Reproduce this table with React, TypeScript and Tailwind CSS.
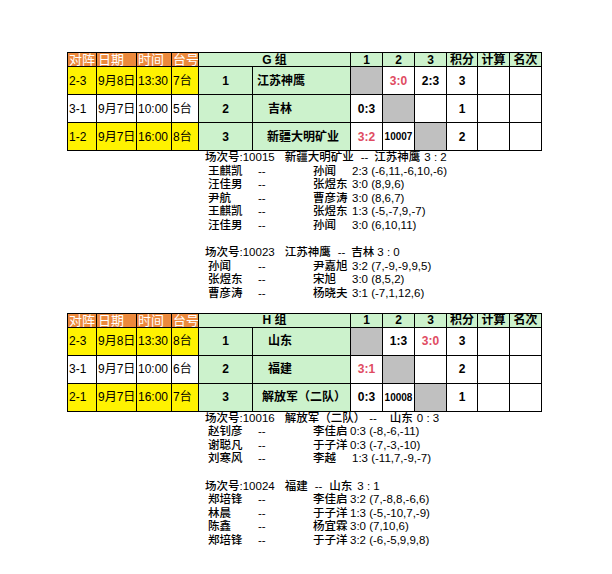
import React from "react";

type Cell = { t?: string; red?: boolean; gray?: boolean; small?: boolean };
type Row = {
  vs: string;
  date: string;
  time: string;
  table: string;
  yellow: boolean;
  num: string;
  team: string;
  pl: number;
  cells: Cell[];
  pts: string;
};

const FONT = "font-['Liberation_Sans','Noto_Sans_CJK_SC',sans-serif]";

function GroupTable({ title, rows }: { title: string; rows: Row[] }) {
  const hdrO = "bg-[#ec893c] text-white text-[13px] leading-[13px] pl-px flex items-center overflow-hidden whitespace-nowrap";
  const hdrG = "bg-[#ccf2cc] text-black text-[12px] font-bold flex items-center justify-center overflow-hidden whitespace-nowrap";
  return (
    <div className="grid w-fit bg-black gap-px p-px grid-cols-[28px_39px_34px_26px_53px_97px_31px_31px_31px_30px_31px_31px] grid-rows-[13px_27px_27px_27px]">
      <div className={hdrO}>对阵</div>
      <div className={hdrO}>日期</div>
      <div className={hdrO}>时间</div>
      <div className={hdrO}>台号</div>
      <div className={`${hdrG} col-span-2`}>{title}</div>
      <div className={hdrG}>1</div>
      <div className={hdrG}>2</div>
      <div className={hdrG}>3</div>
      <div className={hdrG}>积分</div>
      <div className={hdrG}>计算</div>
      <div className={hdrG}>名次</div>
      {rows.map((r, i) => {
        const left = `${r.yellow ? "bg-[#fff200]" : "bg-white"} text-[12px] text-black pl-px flex items-center whitespace-nowrap overflow-hidden`;
        return (
          <React.Fragment key={i}>
            <div className={left}>{r.vs}</div>
            <div className={left}>{r.date}</div>
            <div className={left}>{r.time}</div>
            <div className={left}>{r.table}</div>
            <div className="bg-[#ccf2cc] text-[12px] font-bold flex items-center justify-center">{r.num}</div>
            <div className="bg-[#ccf2cc] text-[12px] font-bold flex items-center whitespace-nowrap overflow-hidden" style={{ paddingLeft: r.pl }}>
              {r.team}
            </div>
            {r.cells.map((c, j) => (
              <div
                key={j}
                className={`${c.gray ? "bg-[#c0c0c0]" : "bg-white"} ${c.red ? "text-[#e04b62]" : "text-black"} ${c.small ? "text-[10px]" : "text-[12px]"} font-bold flex items-center justify-center whitespace-nowrap overflow-hidden`}
              >
                {c.t}
              </div>
            ))}
            <div className="bg-white text-[12px] font-bold flex items-center justify-center">{r.pts}</div>
            <div className="bg-white" />
            <div className="bg-white" />
          </React.Fragment>
        );
      })}
    </div>
  );
}

type Match = {
  no: string;
  a: string;
  b: string;
  score: string;
  m: [number, number, number, number];
  games: { p: string; o: string; s: string; ow: number }[];
};

function MatchBlock({ m }: { m: Match }) {
  return (
    <div>
      <div className="flex whitespace-nowrap h-[13.6px]">
        <span>场次号:{m.no}</span>
        <span style={{ marginLeft: m.m[0] }}>{m.a}</span>
        <span style={{ marginLeft: m.m[1] }}>--</span>
        <span style={{ marginLeft: m.m[2] }}>{m.b}</span>
        <span style={{ marginLeft: m.m[3] }}>{m.score}</span>
      </div>
      {m.games.map((g, i) => (
        <div key={i} className="flex whitespace-nowrap pl-[3px] h-[13.6px]">
          <span className="w-[50px] shrink-0">{g.p}</span>
          <span className="w-[55px] shrink-0">--</span>
          <span className="shrink-0" style={{ width: g.ow }}>{g.o}</span>
          <span>{g.s}</span>
        </div>
      ))}
    </div>
  );
}

const gRows: Row[] = [
  { vs: "2-3", date: "9月8日", time: "13:30", table: "7台", yellow: true, num: "1", team: "江苏神鹰", pl: 4, cells: [{ gray: true }, { t: "3:0", red: true }, { t: "2:3" }], pts: "3" },
  { vs: "3-1", date: "9月7日", time: "10:00", table: "5台", yellow: false, num: "2", team: "吉林", pl: 15, cells: [{ t: "0:3" }, { gray: true }, {}], pts: "1" },
  { vs: "1-2", date: "9月7日", time: "16:00", table: "8台", yellow: true, num: "3", team: "新疆大明矿业", pl: 14, cells: [{ t: "3:2", red: true }, { t: "10007", small: true }, { gray: true }], pts: "2" },
];

const hRows: Row[] = [
  { vs: "2-3", date: "9月8日", time: "13:30", table: "8台", yellow: true, num: "1", team: "山东", pl: 15, cells: [{ gray: true }, { t: "1:3" }, { t: "3:0", red: true }], pts: "3" },
  { vs: "3-1", date: "9月7日", time: "10:00", table: "6台", yellow: false, num: "2", team: "福建", pl: 15, cells: [{ t: "3:1", red: true }, { gray: true }, {}], pts: "2" },
  { vs: "2-1", date: "9月7日", time: "16:00", table: "7台", yellow: true, num: "3", team: "解放军（二队）", pl: 9, cells: [{ t: "0:3" }, { t: "10008", small: true }, { gray: true }], pts: "1" },
];

const g1: Match = {
  no: "10015", a: "新疆大明矿业", b: "江苏神鹰", score: "3 : 2", m: [10, 7, 6, 4],
  games: [
    { p: "王麒凯", o: "孙闻", s: "2:3 (-6,11,-6,10,-6)", ow: 39 },
    { p: "汪佳男", o: "张煜东", s: "3:0 (8,9,6)", ow: 39 },
    { p: "尹航", o: "曹彦涛", s: "3:0 (8,6,7)", ow: 39 },
    { p: "王麒凯", o: "张煜东", s: "1:3 (-5,-7,9,-7)", ow: 39 },
    { p: "汪佳男", o: "孙闻", s: "3:0 (6,10,11)", ow: 39 },
  ],
};
const g2: Match = {
  no: "10023", a: "江苏神鹰", b: "吉林", score: "3 : 0", m: [10, 7, 6, 3],
  games: [
    { p: "孙闻", o: "尹嘉旭", s: "3:2 (7,-9,-9,9,5)", ow: 39 },
    { p: "张煜东", o: "宋旭", s: "3:0 (8,5,2)", ow: 39 },
    { p: "曹彦涛", o: "杨晓夫", s: "3:1 (-7,1,12,6)", ow: 39 },
  ],
};
const h1: Match = {
  no: "10016", a: "解放军（二队）", b: "山东", score: "0 : 3", m: [10, 4, 13, 4],
  games: [
    { p: "赵钊彦", o: "李佳启", s: "0:3 (-8,-6,-11)", ow: 37 },
    { p: "谢聪凡", o: "于子洋", s: "0:3 (-7,-3,-10)", ow: 37 },
    { p: "刘寒风", o: "李越", s: "1:3 (-11,7,-9,-7)", ow: 39 },
  ],
};
const h2: Match = {
  no: "10024", a: "福建", b: "山东", score: "3 : 1", m: [10, 7, 7, 5],
  games: [
    { p: "郑培锋", o: "李佳启", s: "3:2 (7,-8,8,-6,6)", ow: 37 },
    { p: "林晨", o: "于子洋", s: "1:3 (-5,-10,7,-9)", ow: 37 },
    { p: "陈鑫", o: "杨宜霖", s: "3:0 (7,10,6)", ow: 37 },
    { p: "郑培锋", o: "于子洋", s: "3:2 (-6,-5,9,9,8)", ow: 37 },
  ],
};

export default function App() {
  return (
    <div className={`w-[612px] h-[574px] bg-white text-black overflow-hidden pt-[52px] pl-[67px] ${FONT}`}>
      <GroupTable title="G  组" rows={gRows} />
      <div className="ml-[138px] text-[11.5px] leading-[13.6px] font-medium">
        <MatchBlock m={g1} />
        <div className="h-[13.6px]" />
        <MatchBlock m={g2} />
      </div>
      <div className="mt-[12px]">
        <GroupTable title="H  组" rows={hRows} />
      </div>
      <div className="ml-[138px] text-[11.5px] leading-[13.6px] font-medium">
        <MatchBlock m={h1} />
        <div className="h-[13.6px]" />
        <MatchBlock m={h2} />
      </div>
    </div>
  );
}
